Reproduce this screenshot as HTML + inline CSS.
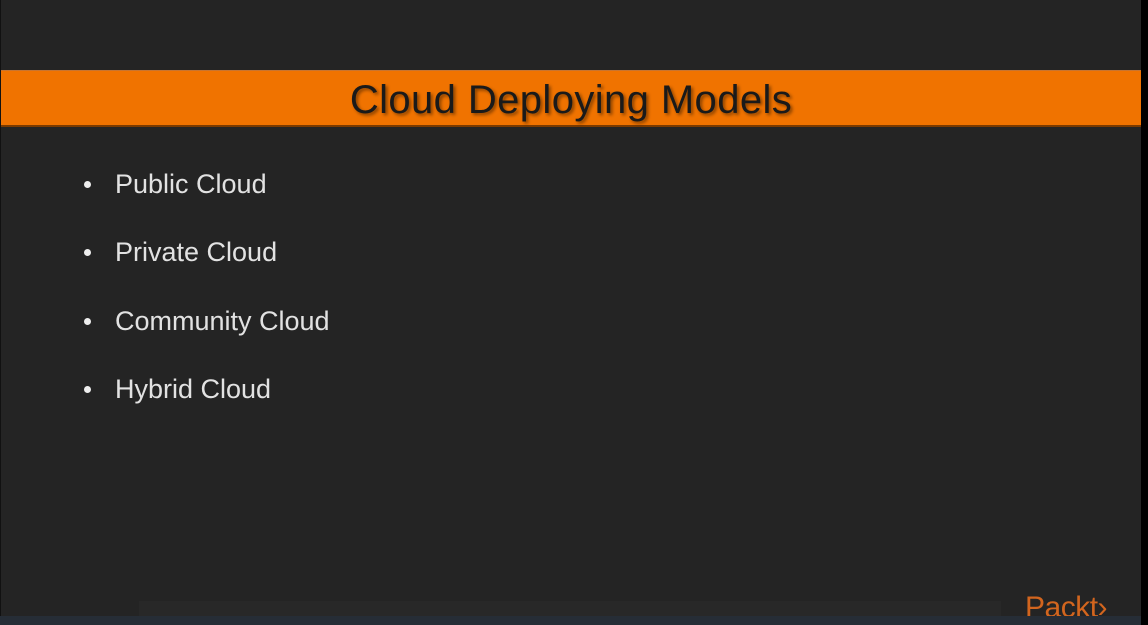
<!DOCTYPE html>
<html><head><meta charset="utf-8"><style>
body{margin:0;width:1148px;height:625px;background:#242424;position:relative;overflow:hidden;font-family:"Liberation Sans",sans-serif}
.l{position:absolute;left:0;top:0;width:1px;height:625px;background:#111}
.r{position:absolute;left:1141px;top:0;width:7px;height:625px;background:#000}
.band{position:absolute;left:1px;top:70px;width:1140px;height:57px;background:#f07300;border-top:1px solid #c8742f;border-bottom:2px solid #7a3a00;box-sizing:border-box}
.band div{position:absolute;left:0;right:0;top:7px;text-align:center;font-size:40px;color:#1a1a1a;text-shadow:2px 2px 3px rgba(0,0,0,.45);letter-spacing:0.4px}
.li{position:absolute;left:115px;font-size:27px;color:#e2e2e2;line-height:30px}
.li:before{content:"";position:absolute;left:-31px;top:12px;width:7px;height:7px;border-radius:50%;background:#eee}
.strip{position:absolute;left:139px;top:601px;width:862px;height:15px;background:#282828}
.bot{position:absolute;left:0;top:616px;width:1141px;height:9px;background:#262d36}
.logo{position:absolute;left:1025px;top:591px;font-size:30px;color:#d2651e;letter-spacing:-0.5px}
</style></head><body>
<div class="l"></div>
<div class="band"><div>Cloud Deploying Models</div></div>
<div class="li" style="top:169px">Public Cloud</div>
<div class="li" style="top:237px">Private Cloud</div>
<div class="li" style="top:306px">Community Cloud</div>
<div class="li" style="top:374px">Hybrid Cloud</div>
<div class="strip"></div>
<div class="logo">Packt›</div>
<div class="bot"></div>
<div class="r"></div>
</body></html>
